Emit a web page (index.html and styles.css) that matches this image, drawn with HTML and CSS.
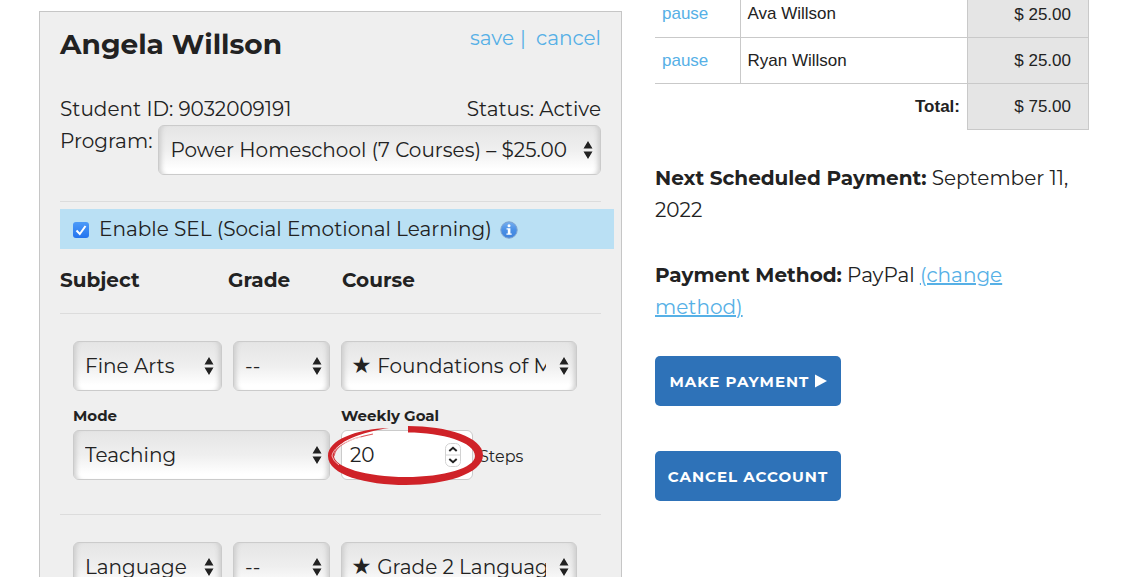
FILE: index.html
```html
<!DOCTYPE html>
<html lang="en">
<head>
<meta charset="utf-8">
<title>Account</title>
<link rel="stylesheet" href="styles.css">
</head>
<body>
<main class="page">
  <form class="student">
    <header class="student-head">
      <h2 class="student-name">Angela Willson</h2>
      <nav class="student-actions"><a href="#save">save</a><span>|</span><a href="#cancel">cancel</a></nav>
    </header>
    <div class="info"><span>Student ID: 9032009191</span><span>Status: Active</span></div>
    <div class="program">
      <label for="program">Program:</label>
      <select id="program" class="field"><option>Power Homeschool (7 Courses) – $25.00 / Month</option></select>
    </div>
    <hr class="rule">
    <div class="sel">
      <input type="checkbox" id="sel" class="check" checked>
      <label for="sel">Enable SEL (Social Emotional Learning)</label>
      <svg class="info-icon" viewBox="0 0 18 18" aria-hidden="true">
        <defs><linearGradient id="blue" x1="0" y1="0" x2="0" y2="1"><stop offset="0" stop-color="#74aef0"/><stop offset=".5" stop-color="#4a90e6"/><stop offset="1" stop-color="#3f82dc"/></linearGradient></defs>
        <circle cx="9" cy="9" r="8.2" fill="url(#blue)" stroke="#7fa3cf" stroke-width="1"/>
        <circle cx="9" cy="4.8" r="1.5" fill="#fff"/>
        <path d="M6.5 7.2h3.9v5.3h1.3v1.3H6.4v-1.3h1.4V8.5H6.5z" fill="#fff"/>
      </svg>
    </div>
    <div class="columns"><span>Subject</span><span>Grade</span><span>Course</span></div>
    <hr class="rule">
    <section class="course">
      <div class="course-row">
        <select class="field" aria-label="Subject"><option>Fine Arts</option></select>
        <select class="field" aria-label="Grade"><option>--</option></select>
        <select class="field field-wide" aria-label="Course"><option>★ Foundations of Music</option></select>
      </div>
      <div class="course-row">
        <div class="mode">
          <label class="small-label" for="mode">Mode</label>
          <select id="mode" class="field"><option>Teaching</option></select>
        </div>
        <div class="goal">
          <label class="small-label" for="goal">Weekly Goal</label>
          <div class="goal-line">
            <div class="goal-box">
              <input id="goal" class="goal-input" type="number" value="20">
              <svg class="stepper" viewBox="0 0 16 24" aria-hidden="true">
                <rect x=".5" y=".5" width="15" height="23" rx="5" fill="#fff" stroke="#d2d2d2"/>
                <path d="M1 12h14" stroke="#d2d2d2"/>
                <path d="M4.300 8L8 4.800l3.700 3.200M4.300 16L8 19.200l3.700-3.200" fill="none" stroke="#222" stroke-width="2"/>
              </svg>
              <svg class="ring" viewBox="0 0 158 62" aria-hidden="true">
                <path fill="#cf2228" d="M81 1C120 1 156 12 156 30C156 49 117 60 79 60C39 60 1 50 1 31C1 15 29 4 62 3C36 7 7 16 7 31C7 42 39 52 79 52C117 52 148 43 148 31C148 17 115 7.500 81 7.500Z"/>
                <path fill="none" stroke="#dc5a5e" stroke-width="1.200" d="M46 9C25 13 8 20 7 31"/>
                <path fill="none" stroke="#fff" stroke-width=".7" d="M34 12C17 16 6 23 5 31Q6 36 12 40"/>
              </svg>
            </div>
            <span class="steps">Steps</span>
          </div>
        </div>
      </div>
    </section>
    <hr class="rule">
    <section class="course">
      <div class="course-row">
        <select class="field" aria-label="Subject"><option>Language</option></select>
        <select class="field" aria-label="Grade"><option>--</option></select>
        <select class="field field-wide" aria-label="Course"><option>★ Grade 2 Language Arts</option></select>
      </div>
    </section>
  </form>
  <aside class="billing">
    <table class="bill">
      <tbody>
        <tr><td class="pause"><a href="#ava">pause</a></td><td>Ava Willson</td><td class="amount">$ 25.00</td></tr>
        <tr><td class="pause"><a href="#ryan">pause</a></td><td>Ryan Willson</td><td class="amount">$ 25.00</td></tr>
      </tbody>
      <tfoot>
        <tr><th colspan="2" scope="row">Total:</th><td class="amount">$ 75.00</td></tr>
      </tfoot>
    </table>
    <p class="note"><strong>Next Scheduled Payment:</strong> September 11, 2022</p>
    <p class="note"><strong>Payment Method:</strong> PayPal <a class="change" href="#method">(change<br>method)</a></p>
    <div class="buttons">
      <button type="button" class="button">MAKE PAYMENT <svg class="play" viewBox="0 0 12 14" aria-hidden="true"><path d="M0 0.500L12 7L0 13.500z" fill="#fff"/></svg></button>
      <button type="button" class="button">CANCEL ACCOUNT</button>
    </div>
  </aside>
</main>
</body>
</html>
```
FILE: styles.css
```css
* { box-sizing: border-box; }
body {
  margin: 0;
  background: #fff;
  color: #222;
  font: 20px/32px Montserrat, Inter, "Open Sans", sans-serif;
}
a { color: #56b0e6; text-decoration: none; }
.page {
  display: grid;
  grid-template-columns: 583fr 434fr;
  gap: 33px;
  height: 100vh;
  padding: 0 41px 0 39px;
  overflow: hidden;
}
.student {
  align-self: start;
  margin-top: 11px;
  padding: 10px 20px 32px;
  background: #efefef;
  border: 1px solid #c6c6c6;
}
.student-head { display: flex; justify-content: space-between; height: 71px; }
.student-name { margin: 0; font-size: 28px; line-height: 44px; font-weight: 700; }
.student-actions { display: flex; gap: 6px; color: #56b0e6; }
.student-actions a:last-child { padding-left: 4px; }
.info { display: flex; justify-content: space-between; }
.program { display: flex; gap: 6px; }
.program .field { flex: 1; }
.field {
  width: 100%;
  min-width: 0;
  height: 50px;
  padding: 0 30px 0 11px;
  appearance: none;
  color: #222;
  font: inherit;
  text-overflow: clip;
  border: 1px solid #cbcbcb;
  border-radius: 6px;
  background:
    url("data:image/svg+xml,%3Csvg xmlns='http://www.w3.org/2000/svg' width='10' height='18'%3E%3Cpath d='M5 0L9.500 7.500H.5zM5 18L9.500 10.500H.5z' fill='%23222'/%3E%3C/svg%3E") no-repeat right 7px center,
    linear-gradient(#e5e5e5, #efefef 50%, #fff 90%);
  box-shadow: inset 6px 0 5px -4px #ccc, inset -6px 0 5px -4px #ccc;
}
.field-wide { padding-left: 9px; }
.rule { height: 0; margin: 0; border: 0; border-top: 1px solid #dcdcdc; }
.program + .rule { margin-top: 26px; }
.sel {
  display: flex;
  align-items: center;
  height: 40px;
  margin: 7px -13px 0 0;
  padding-left: 13px;
  background: #bae0f4;
}
.check {
  width: 16px;
  height: 16px;
  margin: 2px 10px 0 0;
  appearance: none;
  border-radius: 3px;
  background: url("data:image/svg+xml,%3Csvg xmlns='http://www.w3.org/2000/svg' width='16' height='16'%3E%3Cpath d='M3.500 8.500L6.800 12L12.500 4' fill='none' stroke='white' stroke-width='2'/%3E%3C/svg%3E"), linear-gradient(#4d9bf8, #2474ee);
}
.info-icon { width: 18px; height: 18px; margin: 2px 0 0 8px; }
.columns {
  display: grid;
  grid-template-columns: 168fr 114fr 259fr;
  padding: 15px 0 17px;
  font-weight: 700;
}
.course { padding: 27px 24px 34px 13px; }
.course-row {
  display: grid;
  grid-template-columns: 149fr 97fr 236fr;
  gap: 11px;
}
.mode { grid-column: span 2; }
.small-label { display: block; padding-top: 10px; font-size: 15px; line-height: 29px; font-weight: 700; }
.goal-line { display: flex; align-items: center; gap: 6px; }
.goal-box { position: relative; width: 132px; }
.goal-input {
  display: block;
  width: 100%;
  height: 50px;
  padding: 0 8px;
  color: #222;
  font: inherit;
  background: #fff;
  border: 1px solid #cbcbcb;
  border-radius: 6px;
  appearance: textfield;
}
.goal-input::-webkit-inner-spin-button { appearance: none; }
.stepper { position: absolute; top: 13px; right: 12px; width: 16px; height: 24px; }
.ring { position: absolute; top: -5px; left: -14px; width: 158px; height: 62px; pointer-events: none; }
.steps { padding-top: 3px; font-size: 16px; }
.billing { margin-top: -9px; }
.bill {
  width: 100%;
  table-layout: fixed;
  border-collapse: collapse;
  font: 17px/24px "Liberation Sans Narrow", "Arial Narrow", "Liberation Sans", sans-serif;
}
.bill td, .bill th { height: 46px; padding: 0 7px; }
.bill tbody td { border-bottom: 1px solid #c9c9c9; }
.bill th { text-align: right; }
.bill .pause { width: 85px; border-right: 1px solid #c9c9c9; }
.bill .amount {
  width: 121px;
  padding-right: 17px;
  text-align: right;
  background: #e5e5e5;
  border: 1px solid #c9c9c9;
}
.note { margin: 32px 0; }
.note + .note { margin: 33px 0; }
.change { text-decoration: underline; }
.buttons { display: flex; flex-direction: column; align-items: flex-start; gap: 45px; }
.button {
  min-width: 186px;
  height: 50px;
  padding: 2px 12px 0;
  color: #fff;
  font: 700 15px/20px Montserrat, Inter, "Open Sans", sans-serif;
  letter-spacing: 1px;
  white-space: nowrap;
  background: #2e72b8;
  border: 0;
  border-radius: 5px;
}
.play { width: 12px; height: 14px; vertical-align: -1px; }
```
